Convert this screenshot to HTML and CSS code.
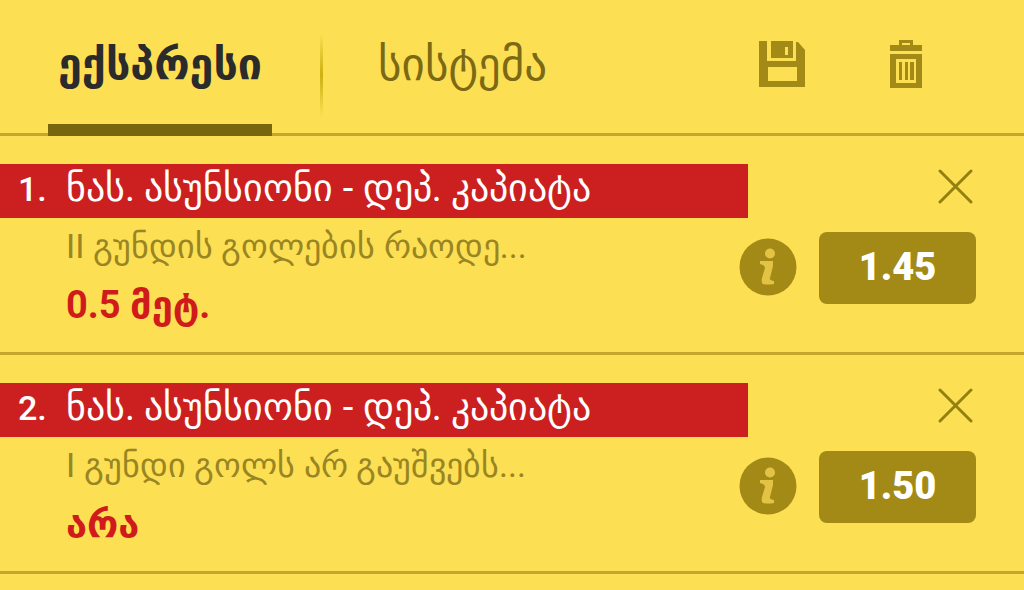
FILE: index.html
```html
<!DOCTYPE html>
<html lang="ka">
<head>
<meta charset="utf-8">
<meta name="viewport" content="width=device-width, initial-scale=1">
<title>ექსპრესი</title>
<link rel="stylesheet" href="styles.css">
</head>
<body>
<header class="toolbar">
  <nav class="tabs">
    <button class="tab tab-active" type="button">ექსპრესი</button>
    <span class="divider"></span>
    <button class="tab" type="button">სისტემა</button>
  </nav>
  <div class="actions">
    <button class="icon-button" type="button" aria-label="შენახვა">
      <svg width="46" height="46" viewBox="0 0 46 46"><path fill="currentColor" fill-rule="evenodd" d="M0 0H8V20H37V1H39L46 9V46H0ZM9 26V40H38V26Z"/><path fill="currentColor" fill-rule="evenodd" d="M12 0H34V17H12ZM26 6V14H29V6Z"/></svg>
    </button>
    <button class="icon-button" type="button" aria-label="წაშლა">
      <svg width="32" height="48" viewBox="0 0 32 48"><path fill="currentColor" fill-rule="evenodd" d="M9 0H23V5H32V11H0V5H9ZM12 3V5H20V3ZM0 14H32V48H0ZM6 19V43H26V19Z"/><path fill="currentColor" d="M9 22H12V40H9ZM15 22H18V40H15ZM20 22H24V40H20Z"/></svg>
    </button>
  </div>
</header>
<main>
  <article class="bet">
    <div class="details">
      <h2 class="match"><span class="number">1.</span>ნას. ასუნსიონი - დეპ. კაპიატა</h2>
      <p class="market">II გუნდის გოლების რაოდე...</p>
      <p class="pick">0.5 მეტ.</p>
    </div>
    <div class="side">
      <button class="icon-button close" type="button" aria-label="დახურვა">
        <svg width="35" height="35" viewBox="0 0 35 35"><path fill="none" stroke="currentColor" stroke-width="3" stroke-linecap="round" d="M2 2L33 33M33 2L2 33"/></svg>
      </button>
      <div class="price-row">
        <button class="icon-button info" type="button" aria-label="ინფორმაცია">
          <svg width="58" height="58" viewBox="0 0 58 58"><circle cx="29" cy="29" r="28.500" fill="currentColor"/><g fill="#e2c344"><circle cx="31" cy="15.500" r="5"/><path d="M21 23H34V28L31 40Q30 42 35 43V46Q29 47 24 46Q22 44 23 40L26 30Q26 27 21 26Z"/></g></svg>
        </button>
        <button class="price" type="button">1.45</button>
      </div>
    </div>
  </article>
  <article class="bet">
    <div class="details">
      <h2 class="match"><span class="number">2.</span>ნას. ასუნსიონი - დეპ. კაპიატა</h2>
      <p class="market">I გუნდი გოლს არ გაუშვებს...</p>
      <p class="pick">არა</p>
    </div>
    <div class="side">
      <button class="icon-button close" type="button" aria-label="დახურვა">
        <svg width="35" height="35" viewBox="0 0 35 35"><path fill="none" stroke="currentColor" stroke-width="3" stroke-linecap="round" d="M2 2L33 33M33 2L2 33"/></svg>
      </button>
      <div class="price-row">
        <button class="icon-button info" type="button" aria-label="ინფორმაცია">
          <svg width="58" height="58" viewBox="0 0 58 58"><circle cx="29" cy="29" r="28.500" fill="currentColor"/><g fill="#e2c344"><circle cx="31" cy="15.500" r="5"/><path d="M21 23H34V28L31 40Q30 42 35 43V46Q29 47 24 46Q22 44 23 40L26 30Q26 27 21 26Z"/></g></svg>
        </button>
        <button class="price" type="button">1.50</button>
      </div>
    </div>
  </article>
</main>
</body>
</html>
```
FILE: styles.css
```css
* {
  box-sizing: border-box;
}

body {
  margin: 0;
  background: #fddf54;
  font-family: Roboto, sans-serif;
}

button {
  margin: 0;
  padding: 0;
  border: 0;
  background: none;
  font: inherit;
  cursor: pointer;
}

.toolbar {
  display: flex;
  justify-content: space-between;
  padding: 0 102px 0 48px;
  border-bottom: 3px solid #c4a52e;
}

.tabs {
  display: flex;
  align-items: center;
}

.tab {
  height: 136px;
  margin-bottom: -3px;
  padding: 4px 10px 0;
  border-bottom: 12px solid transparent;
  color: #7b6914;
  font-size: 45px;
  font-family: "DejaVu Sans", sans-serif;
}

.tab-active {
  border-bottom-color: #78660f;
  color: #2b2b2b;
  font-size: 43px;
  font-weight: 700;
}

.divider {
  width: 3px;
  height: 84px;
  margin: 16px 45px 0 48px;
  background: linear-gradient(transparent, #cdb011, transparent);
}

.actions {
  display: flex;
  align-items: center;
  gap: 85px;
  padding-bottom: 6px;
}

.icon-button {
  display: flex;
  color: #a38a17;
}

.bet {
  display: flex;
  justify-content: space-between;
  padding: 28px 48px 16px 0;
  border-bottom: 3px solid #c4a52e;
}

.details {
  flex: 0 1 748px;
  min-width: 0;
}

.match,
.market,
.pick {
  margin: 0;
  white-space: nowrap;
}

.match {
  display: flex;
  height: 54px;
  background: #cc1f1f;
  color: #fff;
  font-size: 38px;
  font-weight: 400;
  line-height: 48px;
}

.number {
  flex: none;
  width: 66px;
  padding-left: 18px;
  font-size: 34px;
  font-weight: 500;
  line-height: 50px;
}

.market {
  padding-left: 66px;
  color: #998522;
  font-size: 34px;
  line-height: 56px;
}

.pick {
  padding-left: 66px;
  color: #d01b1b;
  font-size: 38px;
  font-family: Roboto, "DejaVu Sans", sans-serif;
  font-weight: 700;
  line-height: 62px;
}

.side {
  display: flex;
  flex-direction: column;
  align-items: flex-end;
  gap: 28px;
  margin-left: -9px;
  padding-top: 5px;
}

.close {
  margin-right: 3px;
  color: #93800f;
}

.price-row {
  display: flex;
  align-items: center;
  gap: 22px;
}

.info {
  padding-bottom: 2px;
}

.price {
  width: 157px;
  height: 72px;
  padding-bottom: 2px;
  border-radius: 8px;
  background: #a38a17;
  color: #fff;
  font-size: 38px;
  font-weight: 900;
}
```
